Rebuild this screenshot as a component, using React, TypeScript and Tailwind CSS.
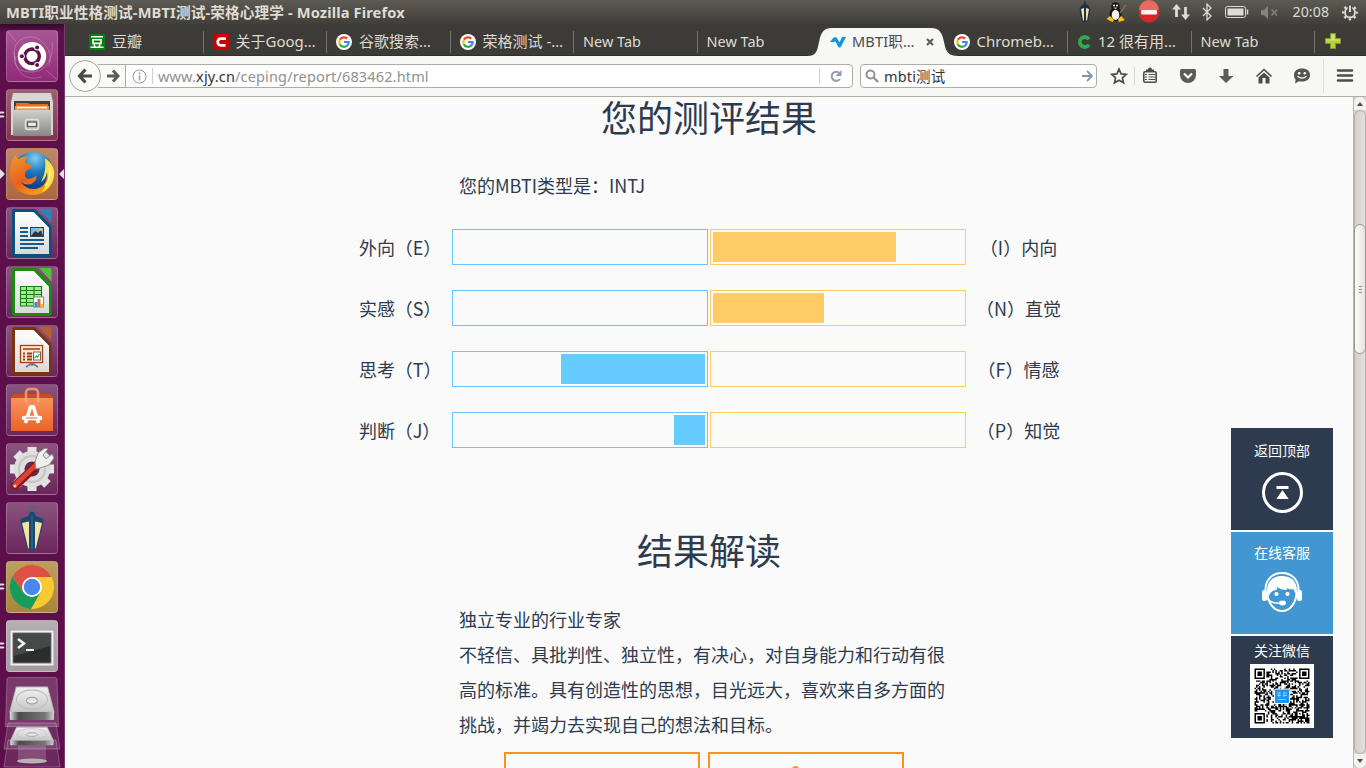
import React from "react";

type P = { children?: React.ReactNode };

const UI = "font-['Noto_Sans','Noto_Sans_CJK_SC',sans-serif]";

function GoogleIcon() {
  return (
    <svg width="16" height="16" viewBox="0 0 16 16" className="block shrink-0">
      <circle cx="8" cy="8" r="8" fill="#fff" />
      <g fill="none" strokeWidth="2.2">
        <path d="M11.3 4.6A4.7 4.7 0 0 0 3.9 5.8" stroke="#ea4335" />
        <path d="M3.9 5.7a4.8 4.8 0 0 0 0 4.6" stroke="#fbbc05" />
        <path d="M3.8 10.2a4.7 4.7 0 0 0 7.2 1.5" stroke="#34a853" />
        <path d="M10.8 11.8A4.6 4.6 0 0 0 12.7 8H8" stroke="#4285f4" />
      </g>
    </svg>
  );
}

function DoubanIcon() {
  return (
    <svg width="16" height="16" viewBox="0 0 16 16" className="block shrink-0">
      <rect width="16" height="16" fill="#0b7d16" />
      <path d="M2 2.8h12M4 5.8h8v3.6H4zM5 10.5l1 2.5M11 10.5l-1 2.5M1.5 13.3h13" fill="none" stroke="#fff" strokeWidth="1.6" />
    </svg>
  );
}

function RedCIcon() {
  return (
    <svg width="16" height="16" viewBox="0 0 16 16" className="block shrink-0">
      <rect width="16" height="16" fill="#c80000" />
      <path d="M13 4.6H8C5.500 4.600 4.700 6 4.700 8s.8 3.400 3.300 3.400H12.600" fill="none" stroke="#fff" strokeWidth="2.600" />
    </svg>
  );
}

function GreenCIcon() {
  return (
    <svg width="14" height="16" viewBox="0 0 14 16" className="block shrink-0">
      <path d="M12 5.200A5 5 0 1 0 12 10.800" fill="none" stroke="#2fa84f" strokeWidth="3.800" />
    </svg>
  );
}

function WaveIcon() {
  return (
    <svg width="16" height="12" viewBox="0 0 16 12" className="block shrink-0">
      <path d="M0 6 3.500 1.500 6 1l2.500 3.500L9.500 6.500 12 1h4L10.500 11.500H8.500L5.500 5.500 2.500 6.200z" fill="#1296db" />
    </svg>
  );
}

function Tab({ icon, label, sep = true }: { icon?: React.ReactNode; label: string; sep?: boolean }) {
  return (
    <div className="flex h-8 w-[123.5px] shrink-0 items-center pl-[9px] pt-[3px]">
      {icon}
      <span className={"flex-1 whitespace-nowrap " + (icon ? "pl-[7px] text-[15px]" : "text-[14.5px]")}>{label}</span>
      {sep && <i className="block h-[22px] w-px bg-[#74736d]" />}
    </div>
  );
}

function ActiveTab() {
  return (
    <div className="relative flex h-8 w-[123.5px] shrink-0 items-center pl-[9px] pt-[3px] text-[#4a4a4a]">
      <svg className="absolute -left-[14px] top-0" width="152" height="33" viewBox="0 0 152 33">
        <path d="M0 33v-1c9 0 10-4 12-14C14 8 17 4 25 4H124c8 0 11 4 13 14 2 10 4 14 15 14v1z" fill="#f7f7f5" />
      </svg>
      <div className="relative flex flex-1 items-center gap-[6px]">
        <WaveIcon />
        <span className="tracking-[0.2px]">MBTI职…</span>
        <svg width="8" height="8" viewBox="0 0 8 8" className="ml-auto mr-[11px]">
          <path d="M1 1l6 6M7 1L1 7" stroke="#5a5a58" strokeWidth="2" />
        </svg>
      </div>
    </div>
  );
}

function TopBar() {
  return (
    <header className="flex h-6 shrink-0 items-center bg-linear-to-b from-[#5c5a51] to-[#403f3a] pl-1.5 text-[#dfdbd2]">
      <span className="whitespace-nowrap text-[14.67px] font-bold tracking-[0.12px]">MBTI职业性格测试-MBTI测试-荣格心理学 - Mozilla Firefox</span>
      <div className="ml-auto flex h-6 items-center">
        <svg width="281" height="24" viewBox="0 0 281 24" className="block">
          <path d="M5 1.500h2V4l3 2 1.500 3L9.500 20l-2 2h-3l-2-2L.5 9 2 6l3-2z" fill="#17344f" />
          <path d="M2 9l2 11.500h1V8zM10 9L8 20.500H7V8z" fill="#f5e4a0" />
          <ellipse cx="36.500" cy="14" rx="6" ry="7" fill="#151515" />
          <circle cx="36.500" cy="6.500" r="4.300" fill="#151515" />
          <ellipse cx="36.500" cy="15" rx="3.800" ry="5" fill="#f4f4f4" />
          <circle cx="35" cy="5.500" r="1" fill="#fff" /><circle cx="38" cy="5.500" r="1" fill="#fff" />
          <path d="M34.500 7.500h4l-2 2z" fill="#f6b300" />
          <path d="M27.500 19l3.500-3 4 4-1.500 2zM39 19l3-3 4 4-6 2z" fill="#f9c21a" />
          <path d="M41 13l6-8" stroke="#8a6a48" strokeWidth="1.500" />
          <circle cx="70" cy="12" r="10.500" fill="#d6262a" />
          <path d="M60 10a10 10 0 0 1 20 0z" fill="#e96965" />
          <rect x="62" y="10" width="16" height="4.500" rx="1" fill="#f6f6f6" />
          <path d="M97.500 17V7M106.500 7v10" stroke="#dfdbd2" strokeWidth="2.800" />
          <path d="M93 9.500 97.500 4l4.500 5.500zM102 14.500l4.500 5.500 4.500-5.500z" fill="#dfdbd2" />
          <path d="M124 8l8 8-4 4V4l4 4-8 8" fill="none" stroke="#dfdbd2" strokeWidth="1.300" />
          <rect x="146.500" y="6.500" width="20" height="11" rx="2" fill="none" stroke="#dfdbd2" />
          <rect x="148.500" y="8.500" width="16" height="7" fill="#dfdbd2" />
          <path d="M168.500 9.500v5" stroke="#dfdbd2" strokeWidth="1.500" />
          <path d="M182 10h3l4-4v13l-4-4h-3z" fill="#85837b" />
          <path d="M192.500 9.500l5.500 6m0-6l-5.500 6" stroke="#85837b" strokeWidth="1.600" />
          <text x="213.500" y="17" fontSize="14.200" fill="#dfdbd2" textLength="36.500">20:08</text>
          <circle cx="271" cy="12.500" r="6.800" fill="none" stroke="#dfdbd2" strokeWidth="2.200" strokeDasharray="2.400 2.940" strokeDashoffset="1.200" />
          <circle cx="271" cy="12.500" r="5" fill="none" stroke="#dfdbd2" strokeWidth="1.800" />
          <path d="M271 4v8" stroke="#4b4943" strokeWidth="4.500" /><path d="M271 5.500v6.500" stroke="#dfdbd2" strokeWidth="2" />
        </svg>
        <i className="w-1.5" />
      </div>
    </header>
  );
}

function TabStrip() {
  return (
    <div className="flex h-8 shrink-0 border-b border-[#2f2e2a] bg-[#3c3b37] pl-[15px] text-[14.5px] text-[#dfdbd2]">
      <Tab icon={<DoubanIcon />} label="豆瓣" />
      <Tab icon={<RedCIcon />} label="关于Goog…" />
      <Tab icon={<GoogleIcon />} label="谷歌搜索…" />
      <Tab icon={<GoogleIcon />} label="荣格测试 -…" />
      <Tab label="New Tab" />
      <Tab label="New Tab" sep={false} />
      <ActiveTab />
      <Tab icon={<GoogleIcon />} label="Chromeb…" />
      <Tab icon={<GreenCIcon />} label="12 很有用…" />
      <Tab label="New Tab" />
      <div className="flex items-center pl-[10px] pt-[3px]">
        <svg width="16" height="16" viewBox="0 0 16 16"><path d="M5.500.5h5v5h5v5h-5v5h-5v-5h-5v-5h5z" fill="#b5d334" stroke="#7f9c2c" /><path d="M6.500 1.500h3v5h5v1H1.500v-1h5z" fill="#d4e56f" /></svg>
      </div>
    </div>
  );
}

function Toolbar() {
  return (
    <div className="flex h-[41px] shrink-0 items-center border-b border-[#b0b0a2] bg-[#f7f7f5] pl-1 text-[14.5px]">
      <div className="z-10 flex size-8 shrink-0 items-center justify-center rounded-full border border-[#a9a7a2] bg-[#fafaf9]">
        <svg width="16" height="16" viewBox="0 0 16 16"><path d="M8.500 1.500 2.500 8l6 6.500M3 8h12" fill="none" stroke="#4a4a48" strokeWidth="3.200" /></svg>
      </div>
      <div className="-ml-[6px] flex h-6 w-[758px] shrink-0 items-center rounded-sm border border-[#aeaca6] bg-white">
        <div className="flex h-full w-[30px] items-center border-r border-[#aeaca6] bg-[#f9f9f8] pl-[11px]">
          <svg width="13" height="14" viewBox="0 0 13 14"><path d="M6 1.500 11 7l-5 5.500M0 7h10.500" fill="none" stroke="#5a5a58" strokeWidth="3" /></svg>
        </div>
        <svg width="15" height="15" viewBox="0 0 15 15" className="ml-1.5"><circle cx="7.500" cy="7.500" r="6.500" fill="none" stroke="#9a9a98" /><path d="M7.500 6.500v5M7.500 3.500v1.700" stroke="#9a9a98" strokeWidth="1.500" /></svg>
        <i className="ml-[5px] h-4 w-px bg-[#cfcfcd]" />
        <span className="ml-[5px] whitespace-nowrap pt-px tracking-[0.15px] text-[#91918f]">www.<b className="font-normal text-[#333]">xjy.cn</b>/ceping/report/683462.html</span>
        <i className="ml-auto h-4 w-px bg-[#cfcfcd]" />
        <svg width="14" height="14" viewBox="0 0 14 14" className="ml-[9px] mr-[9px]"><path d="M10.500 4A4.600 4.600 0 1 0 11 10" fill="none" stroke="#929eab" strokeWidth="2" /><path d="M12.500 1v6h-6z" fill="#929eab" /></svg>
      </div>
      <div className="ml-[7px] flex h-6 w-[237px] shrink-0 items-center rounded-sm border border-[#aeaca6] bg-white">
        <svg width="14" height="14" viewBox="0 0 14 14" className="ml-1"><circle cx="5.500" cy="5.500" r="4" fill="none" stroke="#929290" strokeWidth="2" /><path d="M8.500 8.500l4.500 4.500" stroke="#929290" strokeWidth="2.400" /></svg>
        <span className="ml-[5px] pt-px tracking-[0.15px] text-[#333]">mbti测试</span>
        <svg width="11" height="12" viewBox="0 0 11 12" className="ml-auto mr-[3px]"><path d="M5 1l5 5-5 5M0 6h9.500" fill="none" stroke="#8796a6" strokeWidth="1.800" /></svg>
      </div>
      <svg width="269" height="40" viewBox="0 0 269 40" className="block shrink-0">
        <g fill="none" stroke="#4c4c4a">
          <path d="M22 13.200l2.100 4.700 5.100.5-3.800 3.400 1.100 5-4.500-2.600-4.500 2.600 1.100-5-3.800-3.400 5.100-.5z" strokeWidth="1.700" />
          <rect x="46.800" y="15.800" width="12.400" height="10.400" rx="1.200" strokeWidth="1.600" />
          <path d="M48 18.500h2M51.500 18.500h7M48 21h2M51.500 21h7M48 23.500h2M51.500 23.500h7" strokeWidth="1.100" />
        </g>
        <path d="M49 15v-1.500h2a2 2 0 0 1 4 0h2V15h-8z" fill="#4c4c4a" />
        <path d="M37.500 11v18" stroke="#d8d8d5" />
        <path d="M84.500 13h13q1.500 0 1.500 1.500V19a8 8 0 0 1-16 0v-4.500Q83 13 84.500 13z" fill="#5b5b59" />
        <path d="M87 17.500l4 4 4-4" fill="none" stroke="#fff" strokeWidth="2.200" />
        <path d="M126.500 13h5v7h5L129 27l-7-7h4.500z" fill="#5b5b59" />
        <path d="M159.500 20.500l7.500-7 7.500 7" fill="none" stroke="#4c4c4a" strokeWidth="1.600" />
        <path d="M161.500 21.500l5.500-5 5.500 5v6h-4V22h-3v5.500h-4z" fill="#4c4c4a" />
        <path d="M205 12.500c5 0 8 2.500 8 6.500s-3 6.500-8 6.500c-1 0-2 0-3-.3L198 27.500l.7-3.800c-1.300-1.100-1.700-2.500-1.700-4.700 0-4 3-6.500 8-6.500z" fill="#555553" />
        <circle cx="202.200" cy="17.300" r="1.300" fill="#fff" /><circle cx="207.800" cy="17.300" r="1.300" fill="#fff" />
        <path d="M200.500 20.300q4.500 3.600 9 0" fill="none" stroke="#fff" strokeWidth="1.400" />
        <path d="M226.500 3v34" stroke="#dededb" />
        <path d="M241 14.500h14M241 19.500h14M241 24.500h14" stroke="#4c4c4a" strokeWidth="2.600" strokeLinecap="round" />
      </svg>
    </div>
  );
}

function Tile({ children, tint = "bg-white/5", left = 0, right = false }: P & { tint?: string; left?: number; right?: boolean }) {
  return (
    <div className="relative mb-[7px] ml-1.5 size-[52px] shrink-0">
      <div className={"size-[52px] overflow-hidden rounded-[4px] border border-white/20 bg-linear-to-b from-white/25 to-white/5 " + tint}>
        <svg width="52" height="52" viewBox="0 0 52 52" className="-ml-px -mt-px block">{children}</svg>
      </div>
      {left === 2 && <svg className="absolute -left-1.5 top-[21px]" width="5" height="9"><path d="M0 1.500h3.500l1 1-1 1H0zM0 5.500h3.500l1 1-1 1H0z" fill="#e4dfe2" /></svg>}
      {left === 1 && <svg className="absolute -left-1.5 top-[21px]" width="5" height="10"><path d="M0 0l5 5-5 5z" fill="#e4dfe2" /></svg>}
      {right && <svg className="absolute -right-1.5 top-[21px]" width="5" height="10"><path d="M5 0L0 5l5 5z" fill="#e4dfe2" /></svg>}
    </div>
  );
}

function Page({ dark, light, children }: P & { dark: string; light: string }) {
  return (
    <g>
      <path d="M8 2h21l16.500 17v29q0 2-2 2H8q-2 0-2-2V4q0-2 2-2z" fill={dark} />
      <path d="M33 2h10.500q2 0 2 2v11.500z" fill={light} />
      <path d="M9 5h18.500L43 21v26H9z" fill="url(#paper)" />
      <path d="M27.500 5L43 21H39L27.500 9z" fill="#fff" />
      {children}
    </g>
  );
}

function Drive() {
  return (
    <g>
      <path d="M9 14h34l7 22H2z" fill="url(#metal)" stroke="#bcbcbc" />
      <path d="M2 36h48v6q0 1-1 1H3q-1 0-1-1z" fill="url(#front)" />
      <ellipse cx="26" cy="25" rx="17" ry="8.500" fill="none" stroke="#bdbdbd" />
      <ellipse cx="26" cy="26" rx="6" ry="3" fill="#e5e5e5" stroke="#999" />
    </g>
  );
}

function Launcher() {
  return (
    <aside className="flex w-[65px] shrink-0 flex-col overflow-hidden border-r border-[#7d3a6c] bg-[#5c0f4b] bg-linear-to-b from-[#330a2a] from-0% to-[#5c0f4b] to-[8px] pt-1.5">
      <Tile tint="bg-[#8a1f70]">
        <defs>
          <linearGradient id="paper" x2="0" y2="1"><stop stopColor="#fff" /><stop offset="1" stopColor="#d9d9d9" /></linearGradient>
          <linearGradient id="metal" x2="0" y2="1"><stop stopColor="#f2f2f2" /><stop offset="1" stopColor="#c4c4c4" /></linearGradient>
          <linearGradient id="front"><stop stopColor="#e0e0e0" /><stop offset=".2" stopColor="#4a4a4a" /><stop offset=".8" stopColor="#777" /><stop offset="1" stopColor="#d0d0d0" /></linearGradient>
          <linearGradient id="cabinet" x2="0" y2="1"><stop stopColor="#d0d0ce" /><stop offset="1" stopColor="#878784" /></linearGradient>
          <linearGradient id="bag" x2="0" y2="1"><stop stopColor="#f9935c" /><stop offset="1" stopColor="#ed6325" /></linearGradient>
          <linearGradient id="fox" x2=".6" y2="1"><stop stopColor="#f39a2c" /><stop offset=".6" stopColor="#e8601c" /><stop offset="1" stopColor="#f0a020" /></linearGradient>
          <radialGradient id="globe" cx=".55" cy=".15" r=".7"><stop stopColor="#7fcdf0" /><stop offset=".5" stopColor="#1c76ba" /><stop offset="1" stopColor="#123f86" /></radialGradient>
        </defs>
        <g fill="none" stroke="#fff" strokeOpacity=".24">
          <path d="M10 30C2 10 24 2 34 10s12 16 9 26M46 12c2 16-6 30-20 30S8 36 9 26M35 47C18 52 8 40 8 22M1 1l9 10M51 50 40 40" />
        </g>
        <circle cx="26" cy="26.300" r="14.200" fill="#fff" />
        <circle cx="26" cy="26.300" r="7.300" fill="none" stroke="#5c1048" strokeWidth="3.400" />
        <g fill="#fff"><circle cx="15.800" cy="26.300" r="3" /><circle cx="31.100" cy="17.500" r="3" /><circle cx="31.100" cy="35.100" r="3" /></g>
        <g fill="#5c1048"><circle cx="15.800" cy="26.300" r="2" /><circle cx="31.100" cy="17.500" r="2" /><circle cx="31.100" cy="35.100" r="2" /></g>
      </Tile>
      <Tile tint="bg-[#7c2b42]" left={2}>
        <path d="M7 4h38l2 9v33H5V13z" fill="#d6d6d4" />
        <path d="M8 12h36v10H8z" fill="#40403e" />
        <path d="M10 14h12l2 1h18v7H10z" fill="#e2701d" /><path d="M9 17h34v5H9z" fill="#f39b4d" /><path d="M11 18.500h30" stroke="#fff4e4" strokeWidth="1.500" />
        <rect x="7" y="21" width="38" height="26" rx="1" fill="url(#cabinet)" />
        <rect x="19.500" y="30.500" width="13" height="10" rx="2" fill="#b9b9b7" stroke="#e2e2e0" strokeWidth="1.500" />
        <rect x="21.500" y="33" width="9" height="4.500" fill="#eee" stroke="#555" strokeWidth="1.200" />
      </Tile>
      <Tile tint="bg-[#a85f36]" left={1} right>
        <circle cx="27" cy="24.500" r="20.500" fill="url(#globe)" />
        <path d="M9 7l3 4q5-2.500 10-3-3 3-3 7l7 2q0 3-6 6-3 5 2 8 5-1 8-3 2 2-2 6-6 5-13 0 5 8 15 7 10-2 11-13 1-9-2-18 9 8 9 17-2 19-22 20Q5 45 4 26q0-10 5-19z" fill="url(#fox)" />
        <path d="M39 10c7 5 10 11 9 18-1 8-6 13-12 16 5-8 7-13 5-20-1 5-3 8-6 10 4-8 5-14 4-24z" fill="#ffe04a" />
        <path d="M44 20q1 10-5 18" fill="none" stroke="#fff6b8" strokeWidth="1.200" />
      </Tile>
      <Tile>
        <Page dark="#0b4f7e" light="#2b86b7">
          <g stroke="#175c89" strokeWidth="1.800"><path d="M14 21h8M14 25h8M14 29h8M14 33h24M14 37h24M14 41h18" /></g>
          <rect x="24.500" y="20.500" width="13" height="9" fill="#86bbe0" stroke="#174b6e" />
          <path d="M25 29l4-5 3 2 3-3 2 6z" fill="#333" /><circle cx="34.500" cy="22.500" r="1.200" fill="#f5cf3d" />
        </Page>
      </Tile>
      <Tile>
        <Page dark="#1d8a10" light="#4ec23c">
          <rect x="14" y="20" width="22" height="20" fill="#a5e899" />
          <path d="M14.500 20.500h21v19.500h-21zM14 24.500h22M14 28.500h22M14 32.500h22M14 36.500h22M20.500 20v20M28 20v20" fill="none" stroke="#16800c" strokeWidth="1.100" />
          <rect x="27.500" y="31" width="10" height="10" fill="#fff" stroke="#888" />
          <path d="M28.500 36h3v5h-3z" fill="#1c8fe0" /><path d="M31.500 33h3v8h-3z" fill="#e8652a" /><path d="M34.500 38h3v3h-3z" fill="#f1b71b" />
        </Page>
      </Tile>
      <Tile>
        <Page dark="#7b3310" light="#b8602c">
          <rect x="14.500" y="20.500" width="22" height="17" fill="#fbe9dc" stroke="#a4410c" strokeWidth="1.300" />
          <path d="M17 24h17" stroke="#c4622c" strokeWidth="2" />
          <path d="M17 28.500h2M17 31.500h2M17 34.500h2M21 28.500h5M21 31.500h5M21 34.500h5" stroke="#9d3a08" strokeWidth="1.800" />
          <rect x="27.500" y="27" width="7" height="8" fill="#fff" stroke="#666" /><path d="M28.500 33l2-2 1 1 2-3" fill="none" stroke="#3aa62c" strokeWidth="1.200" />
          <path d="M26 38l-6 4M26 38l6 4M26 38v3" stroke="#777" strokeWidth="1.600" />
        </Page>
      </Tile>
      <Tile>
        <path d="M5 13l2-3h38l2 3v6H5z" fill="#c94e18" />
        <path d="M20 18V9q0-4 4-4h4q4 0 4 4v9" fill="none" stroke="#f2906b" strokeWidth="2.500" />
        <path d="M5 14h42v33H5z" fill="url(#bag)" />
        <path d="M20 18v-4M32 18v-4" stroke="#f6ab8c" strokeWidth="2.500" />
        <path d="M19.500 39l5-16h3l5 16" fill="none" stroke="#fff" strokeWidth="3.500" />
        <path d="M18 34h16" stroke="#fff" strokeWidth="4.500" strokeLinecap="round" /><path d="M20 34h11" stroke="#ee6b2d" strokeWidth="1.200" />
      </Tile>
      <Tile>
        <g stroke="#e4e4e2" strokeWidth="9"><path d="M26 4v44M4 26h44M10.500 10.500l31 31M41.500 10.500l-31 31" /></g>
        <circle cx="26" cy="26" r="18" fill="#dededc" /><circle cx="26" cy="26" r="13" fill="none" stroke="#c4c4c2" strokeWidth="2" />
        <circle cx="26" cy="26" r="7.500" fill="#5f2a57" />
        <path d="M9 43L31 22" stroke="#8e1717" strokeWidth="8.500" strokeLinecap="round" />
        <path d="M9 42L31 21" stroke="#d9433b" strokeWidth="5" strokeLinecap="round" />
        <path d="M29 19l3-9 7-5 3 1-5 6 3 4 6-5 2 4-5 7-9 3-4 1z" fill="#f1f1ef" stroke="#8f8f8d" />
        <circle cx="9" cy="43" r="1.500" fill="#f7d0cb" />
      </Tile>
      <Tile>
        <circle cx="26" cy="7.500" r="3" fill="none" stroke="#4b6584" strokeWidth="1.500" />
        <path d="M14.500 17l7.500-3 2-4h4l2 4 7.500 3v3.500l-6.500 25.500-3.500 2.500h-3L21 46l-6.500-25.500z" fill="#1c486d" />
        <path d="M16 21l7-1.500V47L22 45.500z" fill="#f8e2a2" /><path d="M36 21l-7-1.500V47L30 45.500z" fill="#f8e2a2" />
        <path d="M26 14v33" stroke="#2a6590" strokeWidth="1.500" />
      </Tile>
      <Tile tint="bg-[#a57f30]" left={2}>
        <circle cx="26" cy="26" r="22" fill="#f9c931" />
        <path d="M6.500 15.500A22 22 0 0 0 25 48l9.700-17L26 26l-8.700 5z" fill="#1a9b5b" />
        <path d="M6.500 15.500A22 22 0 0 1 45.600 16H26l-8.700 15z" fill="#dd5144" />
        <circle cx="26" cy="26" r="10" fill="#fff" /><circle cx="26" cy="26" r="8.200" fill="#4b85ee" />
      </Tile>
      <Tile tint="bg-[#a0949d]" left={2}>
        <rect x="4" y="10" width="44" height="36" fill="#f0f0ee" stroke="#a2a2a0" />
        <rect x="7" y="13" width="38" height="30" fill="#2a2e2d" stroke="#777" />
        <path d="M8 14h36v12L8 36z" fill="#454948" />
        <path d="M12 19l6 4.500-6 4.500" fill="none" stroke="#f1f1ef" strokeWidth="2.500" /><path d="M20 30h8" stroke="#f1f1ef" strokeWidth="2.200" />
      </Tile>
      <svg width="64" height="91" viewBox="0 0 64 91" className="-mt-[2px] block shrink-0">
        <path d="M9 .5h46q2 0 2 2l1.500 47H5.500L7 2.500q0-2 2-2z" fill="#fff" fillOpacity=".18" stroke="#fff" strokeOpacity=".25" />
        <g transform="translate(8 -6) scale(.92 1.140)"><Drive /></g>
        <path d="M8 46h48l4 26H4z" fill="#fff" fillOpacity=".12" stroke="#fff" strokeOpacity=".25" />
        <path d="M8 63h48l4 27H4z" fill="#fff" fillOpacity=".1" stroke="#fff" strokeOpacity=".25" />
        <path d="M18 66h28v17H18z" fill="#fff" opacity=".17" />
        <g transform="translate(8.500 41.500) scale(.9 .620)"><Drive /></g>
        <ellipse cx="32" cy="84" rx="15" ry="2.500" fill="#bbb2b8" />
      </svg>
    </aside>
  );
}

type Row = { left: string; right: string; l: number; r: number };
const rows: Row[] = [
  { left: "外向（E）", right: "（I）内向", l: 0, r: 183 },
  { left: "实感（S）", right: "（N）直觉", l: 0, r: 111 },
  { left: "思考（T）", right: "（F）情感", l: 144, r: 0 },
  { left: "判断（J）", right: "（P）知觉", l: 31, r: 0 },
];

function Report() {
  return (
    <main className="flex min-w-0 flex-1 flex-col items-center font-['Noto_Sans_CJK_SC',sans-serif] text-[18px] text-[#2e3a4e]">
      <h1 className="h-[41px] text-[36px] leading-[38px]">您的测评结果</h1>
      <p className="mt-[33px] w-[500px] leading-[35px]">您的MBTI类型是：INTJ</p>
      <div className="mt-[26px] flex flex-col gap-[25px]">
        {rows.map((r) => (
          <div key={r.left} className="flex h-9 items-center">
            <span className="w-[103px] pl-[10px] tracking-[-0.1px]">{r.left}</span>
            <div className="flex h-9 w-64 justify-end border border-[#66c7fd] p-0.5">
              <i className="block bg-[#66ccff]" style={{ width: r.l }} />
            </div>
            <div className="ml-0.5 flex h-9 w-64 border border-[#ffcb65] p-0.5">
              <i className="block bg-[#ffcb65]" style={{ width: r.r }} />
            </div>
            <span className="w-[103px] pl-0.5 text-center">{r.right}</span>
          </div>
        ))}
      </div>
      <h2 className="mt-[82px] h-[41px] text-[36px] leading-[38px]">结果解读</h2>
      <div className="mt-[34px] w-[500px] leading-[35px]">
        <p>独立专业的行业专家</p>
        <p>不轻信、具批判性、独立性，有决心，对自身能力和行动有很高的标准。具有创造性的思想，目光远大，喜欢来自多方面的挑战，并竭力去实现自己的想法和目标。</p>
      </div>
      <div className="mt-[10px] flex w-[410px] gap-2">
        <div className="h-20 w-[196px] border-2 border-[#f7931e]" />
        <div className="flex h-20 w-[196px] justify-center border-2 border-[#f7931e] pt-3">
          <i className="mr-[21px] block size-[7px] rounded-full border-2 border-[#f7931e]" />
        </div>
      </div>
    </main>
  );
}

function qrCells() {
  const n = 37;
  const out: string[] = [];
  let s = 20483;
  const finder = (x: number, y: number) => {
    const m = Math.max(Math.abs(x - 3), Math.abs(y - 3));
    return m === 3 || m <= 1;
  };
  for (let y = 0; y < n; y++)
    for (let x = 0; x < n; x++) {
      s = (s * 1103515245 + 12345) % 2147483648;
      let on = (s >> 16) % 100 < 50;
      if (x < 8 && y < 8) on = x < 7 && y < 7 && finder(x, y);
      else if (x > n - 9 && y < 8) on = x > n - 8 && y < 7 && finder(x - n + 7, y);
      else if (x < 8 && y > n - 9) on = x < 7 && y > n - 8 && finder(x, y - n + 7);
      else if (Math.abs(x - 30) < 3 && Math.abs(y - 30) < 3) on = Math.max(Math.abs(x - 30), Math.abs(y - 30)) !== 1;
      if (on) out.push(`M${x} ${y}h1v1h-1z`);
    }
  return out.join("");
}

function SideDock() {
  return (
    <div className="absolute right-[33px] top-[428px] flex w-[102px] flex-col gap-0.5 font-['Noto_Sans_CJK_SC',sans-serif] text-[14px] leading-5 text-white">
      <div className="flex h-[102px] flex-col items-center bg-[#2e3a4e] pt-[12px]">
        <span>返回顶部</span>
        <svg width="42" height="42" viewBox="0 0 42 42" className="mt-[12px]"><circle cx="21.500" cy="20.500" r="19" fill="none" stroke="#fff" strokeWidth="3" /><path d="M15.500 14h12v3h-12zM21.500 18l6.200 9H15.300z" fill="#fff" /></svg>
      </div>
      <div className="flex h-[102px] flex-col items-center bg-[#4297d2] pt-[10px]">
        <span>在线客服</span>
        <svg width="42" height="42" viewBox="0 0 42 42" className="mt-[9px]">
          <path d="M4.500 20C4 9 11 2 21 2s17 7 16.500 18" fill="none" stroke="#fff" strokeWidth="2" />
          <rect x="1" y="19" width="5" height="11" rx="2" fill="#fff" /><rect x="36" y="19" width="5" height="11" rx="2" fill="#fff" />
          <path d="M6 20C6 10 12 5 21 5s15 5 15 15v3c-2-1-3-3-3.500-5-3 1-5 0-6-1l-1 2c-4 0-7-1-9-3l-1 3c-3 0-6 2-7 5H6z" fill="#fff" />
          <path d="M6.500 21c0 11 6.500 19 14.500 19s14.500-8 14.500-19" fill="none" stroke="#fff" strokeWidth="2" />
          <circle cx="15.500" cy="23" r="2.100" fill="#fff" /><circle cx="26.500" cy="23" r="2.100" fill="#fff" />
          <path d="M6 28q6 5 14 4" fill="none" stroke="#fff" strokeWidth="1.500" /><ellipse cx="21.500" cy="32" rx="3.500" ry="2.400" fill="#fff" />
        </svg>
      </div>
      <div className="flex h-[102px] flex-col items-center bg-[#2e3a4e] pt-[4px]">
        <span>关注微信</span>
        <svg width="64" height="64" viewBox="0 0 64 64" className="mt-[4px]">
          <rect width="64" height="64" fill="#fff" />
          <g transform="translate(4.500 4.500) scale(1.486)"><path d={qrCells()} fill="#000" /></g>
          <rect x="24.500" y="25" width="15" height="14.500" rx="1.500" fill="#1d95f0" stroke="#fff" />
          <path d="M27 29h4M27 31.500h4M29 28v5M33 29h4M33 31.500h4M34 28v5M28 35.500h8" stroke="#8dcbfa" strokeWidth="1.100" />
        </svg>
      </div>
    </div>
  );
}

function Scrollbar() {
  return (
    <div className="flex w-[13px] shrink-0 flex-col border-l border-[#b9b6b1] bg-[#d8d5d1]">
      <div className="flex h-[13px] items-center justify-center rounded-t-full bg-[#f4f3f2]">
        <svg width="6" height="4"><path d="M0 4L3 0l3 4z" fill="#4c4c4a" /></svg>
      </div>
      <div className="flex flex-1 flex-col rounded-full border border-[#b3b0ab] bg-linear-to-r from-[#d3d0cc] to-[#e3e1de]">
        <i className="h-[113px]" />
        <div className="-mx-px flex h-[130px] flex-col items-center justify-center gap-0.5 rounded-full border border-[#9b9893] bg-linear-to-r from-[#fcfcfb] to-[#e5e3e0]">
          <i className="h-px w-[3px] bg-[#8f8c87]" /><i className="h-px w-[3px] bg-[#8f8c87]" /><i className="h-px w-[3px] bg-[#8f8c87]" />
        </div>
      </div>
      <div className="flex h-[14px] items-center justify-center rounded-b-full bg-[#f4f3f2]">
        <svg width="6" height="4"><path d="M0 0l3 4 3-4z" fill="#4c4c4a" /></svg>
      </div>
    </div>
  );
}

export default function App() {
  return (
    <div className={"relative flex h-[768px] w-[1366px] flex-col overflow-hidden bg-[#fafafa] " + UI}>
      <TopBar />
      <div className="flex min-h-0 flex-1">
        <Launcher />
        <div className="flex min-w-0 flex-1 flex-col">
          <TabStrip />
          <Toolbar />
          <div className="flex min-h-0 flex-1 bg-[#fafafa]">
            <Report />
            <Scrollbar />
          </div>
        </div>
      </div>
      <SideDock />
    </div>
  );
}
